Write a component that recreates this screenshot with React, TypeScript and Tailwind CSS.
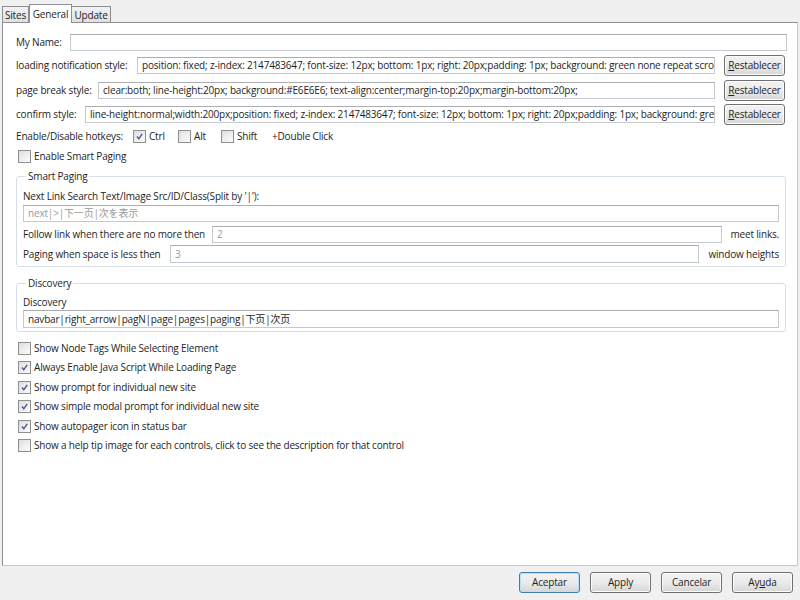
import React from 'react'

const font = { fontFamily: '"Open Sans", "Noto Sans CJK SC", sans-serif' }

function CheckBox({ checked }: { checked?: boolean }) {
  return (
    <span className="relative inline-flex w-[13px] h-[13px] shrink-0 border border-[#8f8f8f] bg-gradient-to-br from-[#dcdcdc] to-[#fbfbfb] p-[2px]">
      <span className="w-full h-full bg-gradient-to-br from-[#e6e6e6] to-[#f8f8f8]" />
      {checked && (
        <svg className="absolute left-[1px] top-[1px]" width="9" height="9" viewBox="0 0 9 9">
          <path d="M2 4.5 L3.8 6.8 L7.2 1.8" fill="none" stroke="#4a5f97" strokeWidth="1.5" />
        </svg>
      )}
    </span>
  )
}

function Field({ value, className = '', muted }: { value?: string; className?: string; muted?: boolean }) {
  return (
    <div
      className={`h-[17px] min-w-0 border border-[#c5c8ce] border-t-[#abadb3] bg-white px-[4px] flex items-center overflow-hidden whitespace-nowrap ${
        muted ? 'text-[#9a9a9a]' : 'text-[#1e1e1e]'
      } ${className}`}
    >
      {value}
    </div>
  )
}

function Btn({ label, u, primary, className = '' }: { label: string; u?: number; primary?: boolean; className?: string }) {
  const parts =
    u === undefined ? [label] : [label.slice(0, u), label[u], label.slice(u + 1)]
  return (
    <button
      className={`h-[21px] w-[61px] shrink-0 rounded-[3px] border px-0 whitespace-nowrap text-[#1e1e1e] bg-gradient-to-b from-[#f2f2f2] via-[#ebebeb] to-[#d6d6d6] ${
        primary ? 'border-[#3c7fb1] shadow-[inset_0_0_0_1px_#b8e2f5]' : 'border-[#707070] shadow-[inset_0_0_0_1px_#fcfcfc]'
      } ${className}`}
    >
      {u === undefined ? (
        label
      ) : (
        <>
          {parts[0]}
          <span className="underline">{parts[1]}</span>
          {parts[2]}
        </>
      )}
    </button>
  )
}

const options = [
  { label: 'Show Node Tags While Selecting Element', checked: false },
  { label: 'Always Enable Java Script While Loading Page', checked: true },
  { label: 'Show prompt for individual new site', checked: true },
  { label: 'Show simple modal prompt for individual new site', checked: true },
  { label: 'Show autopager icon in status bar', checked: true },
  { label: 'Show a help tip image for each controls, click to see the description for that control', checked: false },
]

export default function App() {
  return (
    <div style={font} className="w-[800px] h-[600px] bg-[#f0f0f0] flex flex-col text-[10px] tracking-[-0.18px] text-[#1e1e1e] overflow-hidden whitespace-nowrap">
      {/* tabs */}
      <div className="h-[22px] flex items-end pl-[2px] shrink-0">
        <div className="h-[16px] w-[27px] justify-center border border-b-0 border-[#8c8e94] bg-gradient-to-b from-[#f2f2f2] to-[#e0e0e0] flex items-center leading-none">Sites</div>
        <div className="h-[19px] w-[43px] justify-center -mb-[1px] border border-b-0 border-[#8c8e94] bg-white flex items-center leading-none relative z-10">General</div>
        <div className="h-[16px] w-[39px] justify-center border border-l-0 border-b-0 border-[#8c8e94] bg-gradient-to-b from-[#f2f2f2] to-[#e0e0e0] flex items-center leading-none">Update</div>
      </div>

      {/* panel */}
      <div className="mx-[2px] h-[544px] border border-[#8c8e94] border-b-[#c8c8c8] border-r-[#c8c8c8] bg-white pl-[13px] pr-[10px] pt-[11px] shrink-0">
        <div className="flex items-center h-[17px]">
          <span className="w-[54px] shrink-0">My Name:</span>
          <Field className="flex-1" />
        </div>

        <div className="flex items-center h-[21px] mt-[4px]">
          <span className="w-[121px] shrink-0">loading notification style:</span>
          <Field className="flex-1" value="position: fixed; z-index: 2147483647; font-size: 12px; bottom: 1px; right: 20px;padding: 1px; background: green none repeat scroll 0% 0%;" />
          <Btn label="Restablecer" u={0} className="ml-[9px] mr-[2px]" />
        </div>

        <div className="flex items-center h-[21px] mt-[4px]">
          <span className="w-[82px] shrink-0">page break style:</span>
          <Field className="flex-1" value="clear:both; line-height:20px; background:#E6E6E6; text-align:center;margin-top:20px;margin-bottom:20px;" />
          <Btn label="Restablecer" u={0} className="ml-[9px] mr-[2px]" />
        </div>

        <div className="flex items-center h-[21px] mt-[3px]">
          <span className="w-[69px] shrink-0">confirm style:</span>
          <Field className="flex-1" value="line-height:normal;width:200px;position: fixed; z-index: 2147483647; font-size: 12px; bottom: 1px; right: 20px;padding: 1px; background: green none" />
          <Btn label="Restablecer" u={0} className="ml-[9px] mr-[2px]" />
        </div>

        <div className="flex items-center h-[16px] mt-[3px]">
          <span className="w-[117px] shrink-0">Enable/Disable hotkeys:</span>
          <CheckBox checked />
          <span className="ml-[3px] w-[29px]">Ctrl</span>
          <CheckBox />
          <span className="ml-[3px] w-[27px]">Alt</span>
          <CheckBox />
          <span className="ml-[3px] w-[35px]">Shift</span>
          <span>+Double Click</span>
        </div>

        <div className="flex items-center h-[16px] mt-[4px] pl-[2px] gap-[3px]">
          <CheckBox />
          <span>Enable Smart Paging</span>
        </div>

        <fieldset className="mt-[5px] mr-[1px] border border-[#d5dfe5] rounded-[3px] px-[6px] pb-[3px]">
          <legend className="ml-[3px] px-[2px] leading-[14px]">Smart Paging</legend>
          <div className="leading-[14px] mt-[6px]">Next Link Search Text/Image Src/ID/Class(Split by '|'):</div>
          <Field className="mt-[2px]" muted value="next|>|下一页|次を表示" />
          <div className="flex items-center h-[17px] mt-[4px]">
            <span className="w-[189px] shrink-0">Follow link when there are no more then</span>
            <Field className="flex-1" muted value="2" />
            <span className="ml-[9px]">meet links.</span>
          </div>
          <div className="flex items-center h-[18px] mt-[2px]">
            <span className="w-[147px] shrink-0">Paging when space is less then</span>
            <Field className="flex-1 h-[18px]" muted value="3" />
            <span className="ml-[9px]">window heights</span>
          </div>
        </fieldset>

        <fieldset className="mt-[9px] mr-[1px] border border-[#d5dfe5] rounded-[3px] px-[6px] pb-[3px]">
          <legend className="ml-[3px] px-[2px] leading-[14px]">Discovery</legend>
          <div className="leading-[14px] mt-[5px]">Discovery</div>
          <Field className="mt-[1px] h-[18px]" value="navbar|right_arrow|pagN|page|pages|paging|下页|次页" />
        </fieldset>

        <div className="mt-[8px] flex flex-col gap-y-[3.5px] pl-[2px]">
          {options.map((o) => (
            <div key={o.label} className="flex items-center h-[16px] gap-[3px]">
              <CheckBox checked={o.checked} />
              <span>{o.label}</span>
            </div>
          ))}
        </div>
      </div>

      {/* footer */}
      <div className="flex justify-end gap-[10px] pr-[7px] pt-[6px]">
        <Btn label="Aceptar" primary />
        <Btn label="Apply" />
        <Btn label="Cancelar" />
        <Btn label="Ayuda" u={2} />
      </div>
    </div>
  )
}
